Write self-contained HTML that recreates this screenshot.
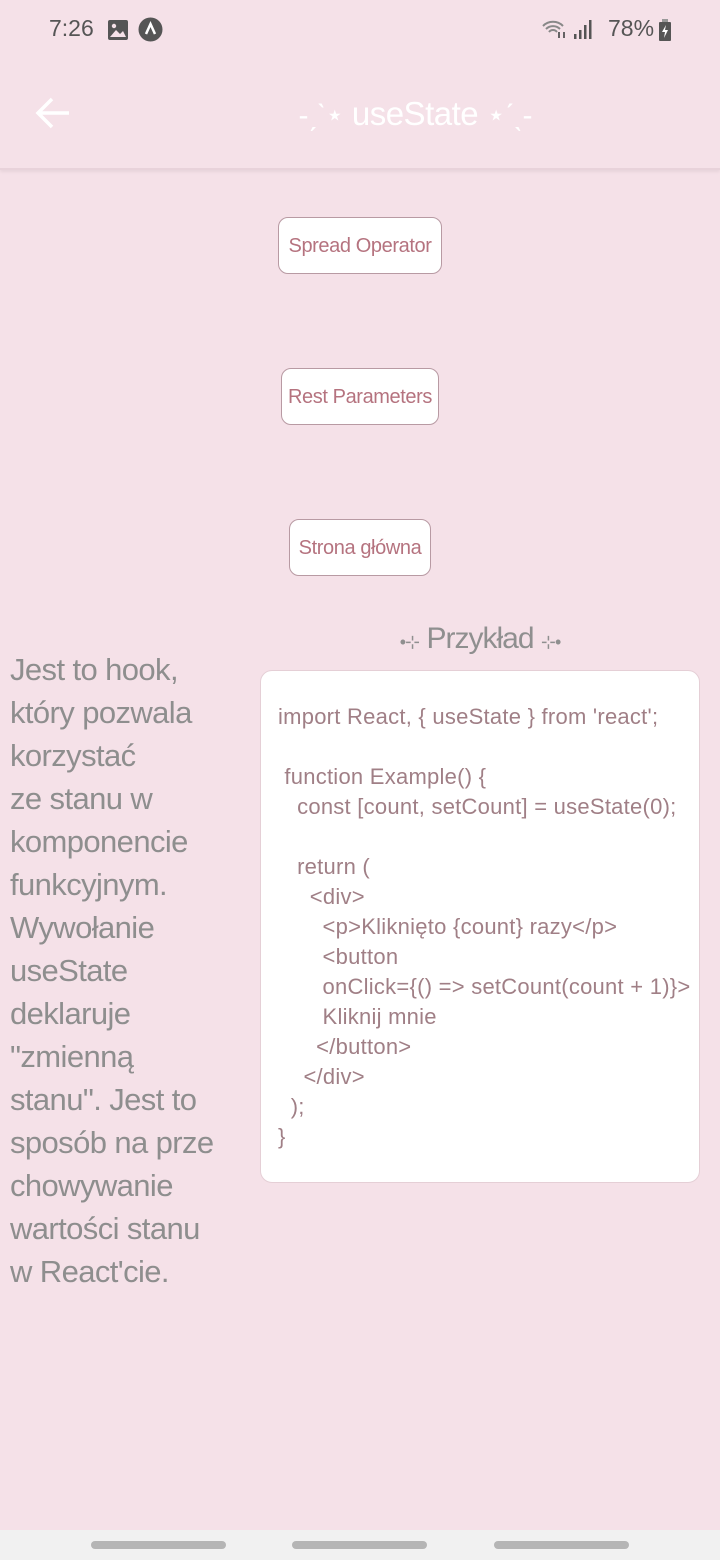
<!DOCTYPE html>
<html><head><meta charset="utf-8"><style>
*{margin:0;padding:0;box-sizing:border-box}
body{width:720px;height:1560px;background:#f5e1e8;font-family:"Liberation Sans",sans-serif;position:relative;overflow:hidden}
.abs{position:absolute}
.status{top:15px;font-size:23px;color:#555}
.hdr{top:0;left:0;width:720px;height:170px;border-bottom:2px solid #e8d2da;box-shadow:0 2px 3px rgba(0,0,0,.06)}
.title{top:95px;left:0;width:720px;text-align:center;color:#fff;font-size:33px;letter-spacing:-0.5px}
.title span{font-size:30px;letter-spacing:-1px}
.btn{background:#fff;border:1px solid #b89aa3;border-radius:10px;color:#b5737f;font-size:20px;text-align:center;line-height:57px;height:57px;letter-spacing:-0.4px}
.left{left:10px;top:648px;font-size:31px;line-height:43px;color:#8e8e8e;letter-spacing:-0.6px}
.card{left:260px;top:670px;width:440px;height:513px;background:#fff;border:1px solid #e5cfd6;border-radius:12px}
.code{left:278px;top:702px;font-size:22px;line-height:30px;color:#a07f86;white-space:pre;letter-spacing:0.25px}
.nav{left:0;top:1530px;width:720px;height:30px;background:#f1f1f1}
.bar{top:1541px;width:135px;height:8px;border-radius:4px;background:#b5b5b5}
</style></head><body>
<div class="abs hdr"></div>
<div class="abs status" style="left:49px">7:26</div>
<svg class="abs" style="left:107px;top:19px" width="22" height="22" viewBox="0 0 22 22"><rect x="1" y="1" width="20" height="20" rx="2" fill="#555"/><circle cx="7" cy="7" r="2.2" fill="#f5e1e8"/><path d="M3 18l6-7 4 4 3-3 3 6z" fill="#f5e1e8"/></svg>
<svg class="abs" style="left:138px;top:17px" width="25" height="25" viewBox="0 0 25 25"><circle cx="12.5" cy="12.5" r="12" fill="#555"/><path d="M8 17l4.5-10 4.5 10" stroke="#fff" stroke-width="2.5" fill="none"/></svg>
<svg class="abs" style="left:541px;top:18px" width="56" height="24" viewBox="0 0 56 24"><path d="M2 8a14 14 0 0 1 20 0M5 11a10 10 0 0 1 14 0M8 14a5 5 0 0 1 8 0" stroke="#888" stroke-width="2" fill="none"/><path d="M18 14v6M23 20v-6" stroke="#555" stroke-width="1.8"/><rect x="33" y="16" width="2.5" height="5" fill="#555"/><rect x="38" y="12" width="2.5" height="9" fill="#555"/><rect x="43" y="7" width="2.5" height="14" fill="#555"/><rect x="48" y="2" width="2.5" height="19" fill="#555"/></svg>
<div class="abs status" style="left:608px">78%</div>
<svg class="abs" style="left:659px;top:19px" width="12" height="22" viewBox="0 0 12 22"><rect x="3" y="0" width="6" height="3" fill="#999"/><rect x="0" y="3" width="12" height="19" rx="1" fill="#555"/><path d="M7 6l-4 7h3l-1 6 4-8H6z" fill="#fff"/></svg>
<svg class="abs" style="left:34px;top:96px" width="38" height="34" viewBox="0 0 38 34"><path d="M35 17H5M18 3L4 17l14 14" stroke="#fff" stroke-width="3.5" fill="none"/></svg>
<div class="abs title" style="left:55px"><span>-ˏˋ⋆</span> useState <span>⋆ˊˎ-</span></div>
<div class="abs btn" style="left:278px;top:217px;width:164px">Spread Operator</div>
<div class="abs btn" style="left:281px;top:368px;width:158px">Rest Parameters</div>
<div class="abs btn" style="left:289px;top:519px;width:142px">Strona główna</div>
<div class="abs" style="left:380px;top:622px;width:200px;text-align:center;font-size:30px;color:#8f8f8f;letter-spacing:-1px"><span style="font-size:18px">•⊹</span> Przykład <span style="font-size:18px">⊹•</span></div>
<div class="abs left">Jest to hook,<br>który pozwala<br>korzystać<br>ze stanu w<br>komponencie<br>funkcyjnym.<br>Wywołanie<br>useState<br>deklaruje<br>"zmienną<br>stanu". Jest to<br>sposób na prze<br>chowywanie<br>wartości stanu<br>w React'cie.</div>
<div class="abs card"></div>
<div class="abs code">import React, { useState } from 'react';

 function Example() {
   const [count, setCount] = useState(0);

   return (
     &lt;div&gt;
       &lt;p&gt;Kliknięto {count} razy&lt;/p&gt;
       &lt;button
       onClick={() =&gt; setCount(count + 1)}&gt;
       Kliknij mnie
      &lt;/button&gt;
    &lt;/div&gt;
  );
}</div>
<div class="abs nav"></div>
<div class="abs bar" style="left:91px"></div>
<div class="abs bar" style="left:292px"></div>
<div class="abs bar" style="left:494px"></div>
</body></html>
